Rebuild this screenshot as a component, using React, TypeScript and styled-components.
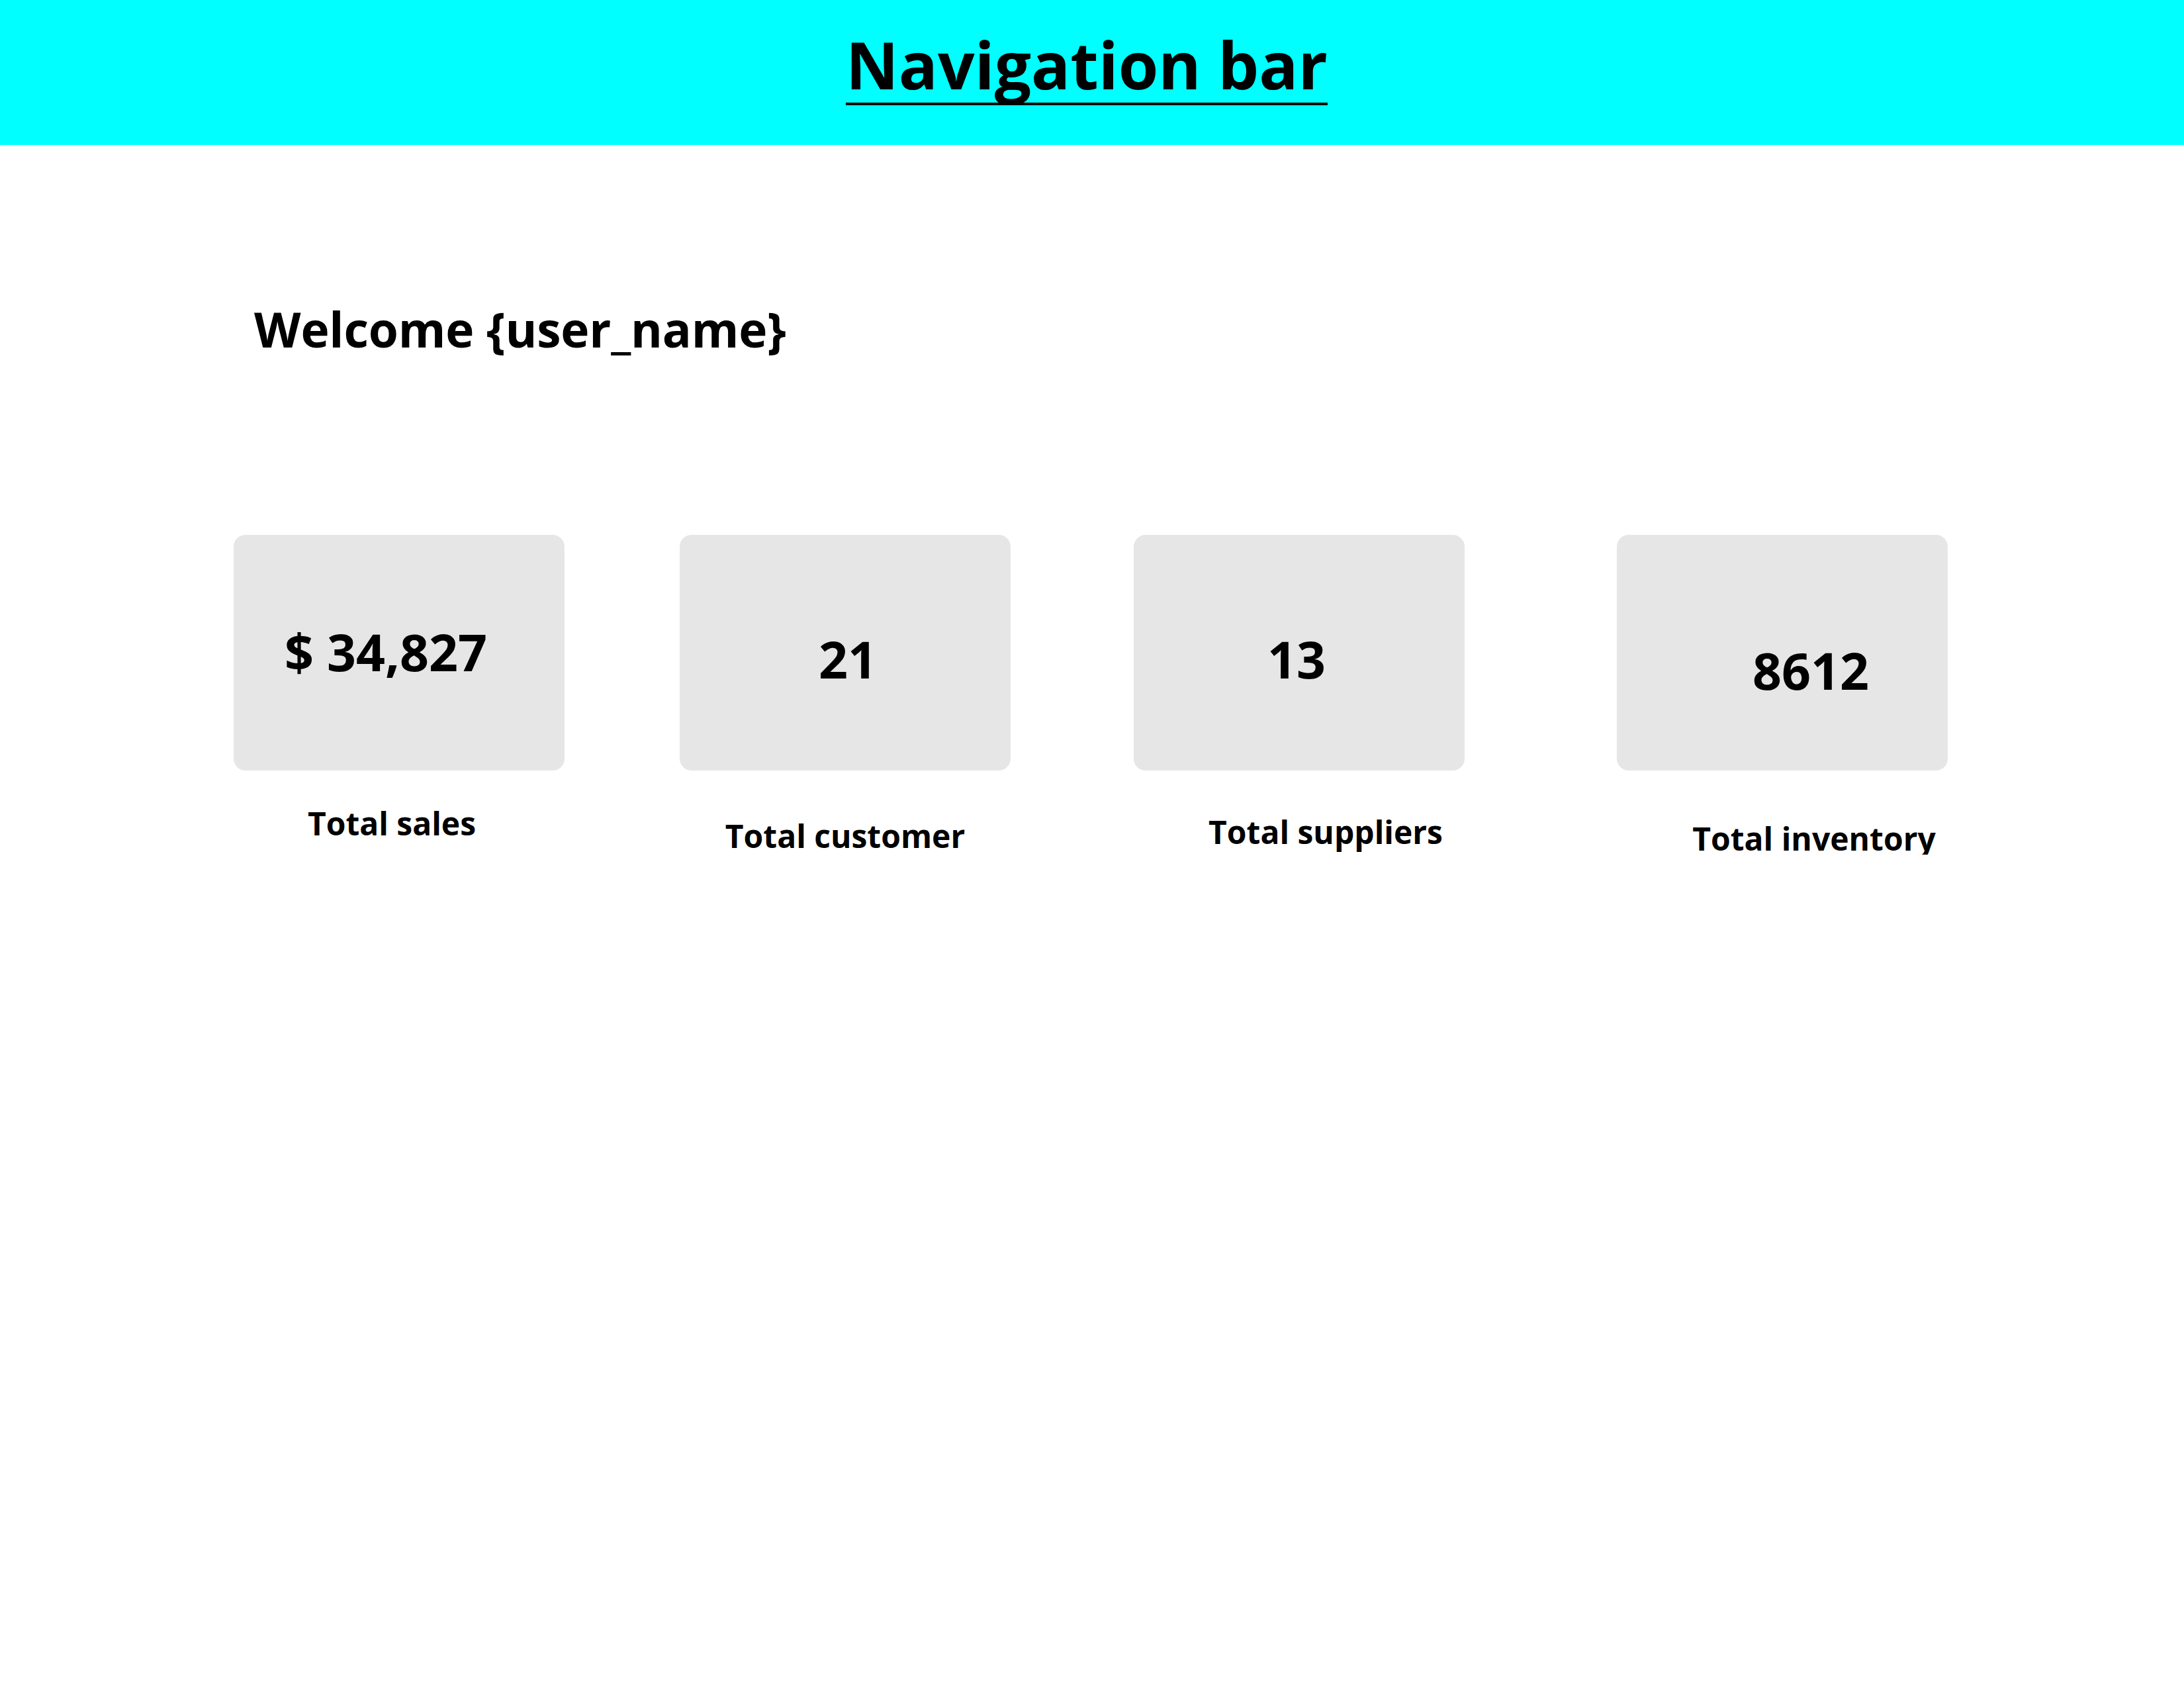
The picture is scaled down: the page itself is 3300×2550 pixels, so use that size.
import styled, { createGlobalStyle } from "styled-components";

const GlobalStyle = createGlobalStyle`
  html, body {
    margin: 0;
    padding: 0;
    background: #ffffff;
  }
  body {
    font-family: "Open Sans", "Noto Sans", sans-serif;
    color: #000000;
  }
`;

const NavBar = styled.header`
  height: 219px;
  box-sizing: border-box;
  padding: 48px 16px 0 0;
  background-color: #00ffff;
  display: flex;
  justify-content: center;
  align-items: flex-start;
`;

const NavTitle = styled.h1`
  display: inline-block;
  margin: 0;
  padding-bottom: 9px;
  border-bottom: 4px solid #000000;
  font-weight: 700;
  font-size: 98px;
  line-height: 1;
`;

const Main = styled.main`
  display: flex;
  flex-direction: column;
  padding: 241px 0 0 384px;
`;

const Welcome = styled.h2`
  margin: 0;
  font-weight: 700;
  font-size: 73px;
  letter-spacing: -0.2px;
  line-height: 1;
`;

const StatsRow = styled.section`
  display: flex;
  align-items: flex-start;
  margin: 275px 0 0 -31px;
`;

const StatColumn = styled.div<{ $gap: number }>`
  width: 500px;
  margin-left: ${(p) => p.$gap}px;
  display: flex;
  flex-direction: column;
`;

const Card = styled.div<{ $top: number; $shift: number }>`
  height: 356px;
  box-sizing: border-box;
  border-radius: 18px;
  background-color: #e6e6e6;
  display: flex;
  justify-content: center;
  align-items: flex-start;
  padding-top: ${(p) => p.$top}px;
  padding-left: ${(p) => (p.$shift > 0 ? p.$shift * 2 : 0)}px;
  padding-right: ${(p) => (p.$shift < 0 ? -p.$shift * 2 : 0)}px;
`;

const Value = styled.span`
  font-weight: 700;
  font-size: 77px;
  line-height: 1;
  white-space: pre;
`;

const Label = styled.div<{ $top: number; $shift: number }>`
  margin-top: ${(p) => p.$top}px;
  display: flex;
  justify-content: center;
  padding-left: ${(p) => (p.$shift > 0 ? p.$shift * 2 : 0)}px;
  padding-right: ${(p) => (p.$shift < 0 ? -p.$shift * 2 : 0)}px;
  font-weight: 700;
  font-size: 48px;
  line-height: 1;
  white-space: nowrap;
`;

const stats = [
  { value: "$ 34,827", label: "Total sales", gap: 0, top: 138, shift: -20, labelTop: 56, labelShift: -11 },
  { value: "21", label: "Total customer", gap: 174, top: 149, shift: 4, labelTop: 75, labelShift: 0 },
  { value: "13", label: "Total suppliers", gap: 186, top: 149, shift: -4, labelTop: 69, labelShift: 40 },
  { value: "8612", label: "Total inventory", gap: 230, top: 166, shift: 43, labelTop: 79, labelShift: 48 },
];

export default function App() {
  return (
    <>
      <GlobalStyle />
      <NavBar>
        <NavTitle>Navigation bar</NavTitle>
      </NavBar>
      <Main>
        <Welcome>Welcome {"{user_name}"}</Welcome>
        <StatsRow>
          {stats.map((s) => (
            <StatColumn key={s.label} $gap={s.gap}>
              <Card $top={s.top} $shift={s.shift}>
                <Value>{s.value}</Value>
              </Card>
              <Label $top={s.labelTop} $shift={s.labelShift}>
                {s.label}
              </Label>
            </StatColumn>
          ))}
        </StatsRow>
      </Main>
    </>
  );
}
